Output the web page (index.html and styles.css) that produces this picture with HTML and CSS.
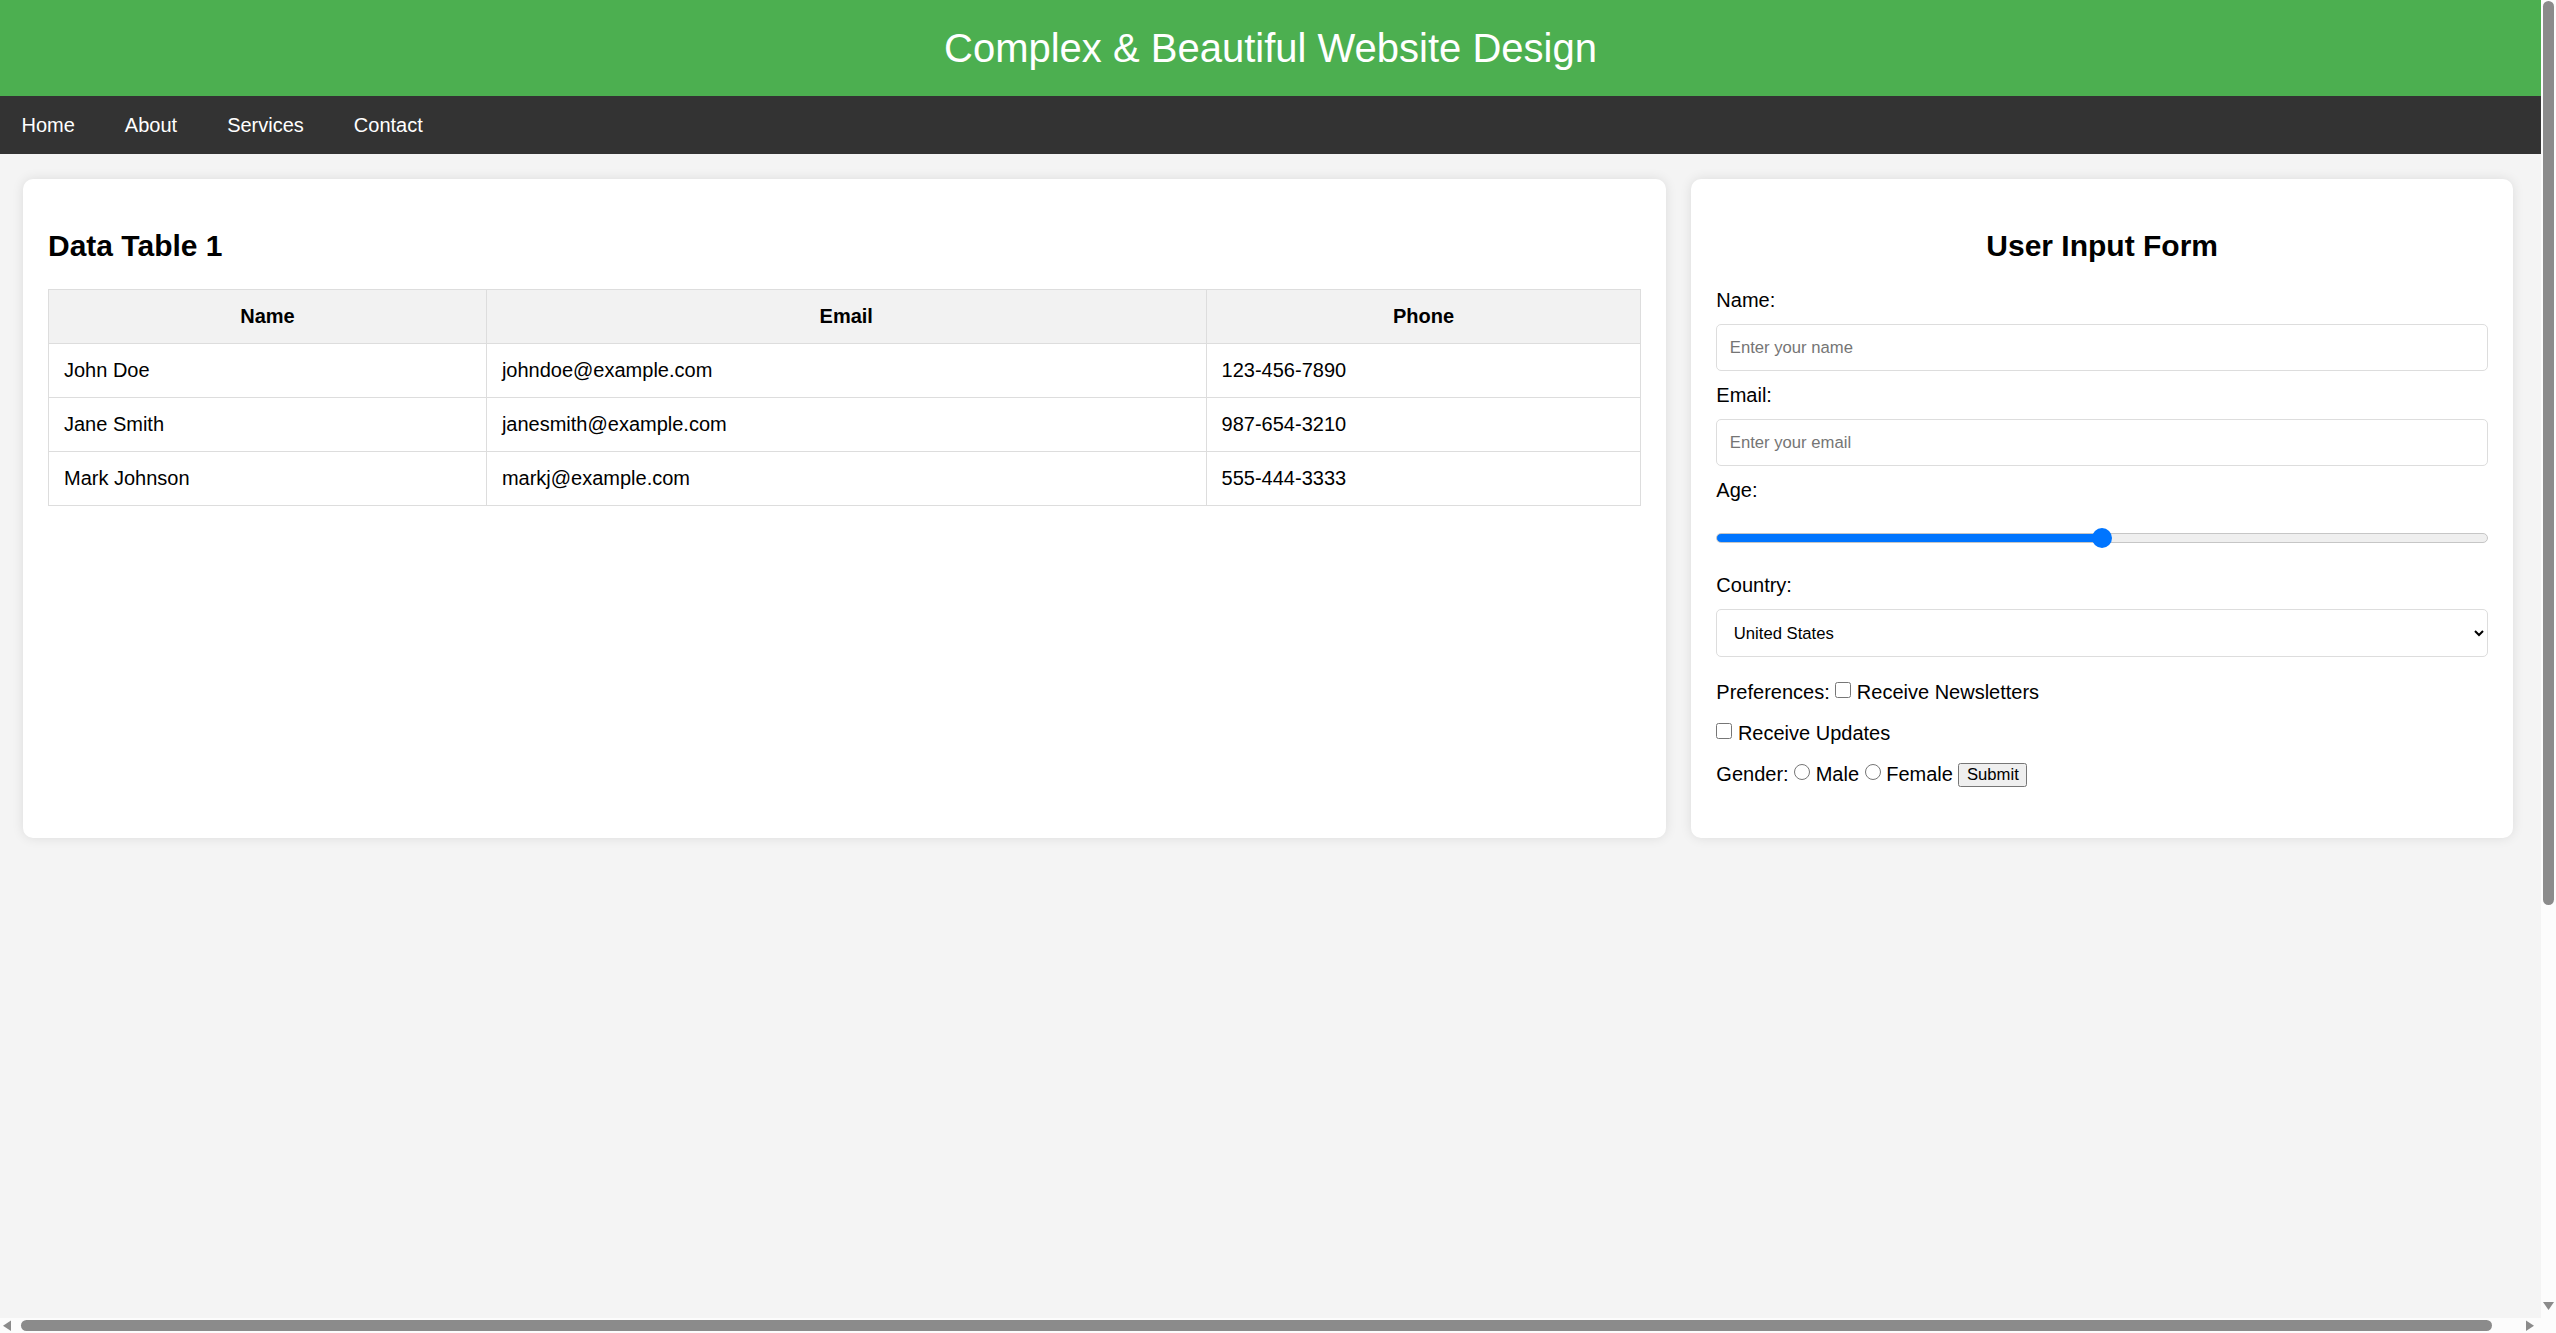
FILE: index.html
```html
<!DOCTYPE html>
<html lang="en">
<head>
<meta charset="utf-8">
<title>Complex &amp; Beautiful Website Design</title>
<link rel="stylesheet" href="styles.css">
</head>
<body>
<div class="window">
  <div class="page">
    <header class="site-header">
      <h1 class="site-title">Complex &amp; Beautiful Website Design</h1>
    </header>
    <nav class="nav">
      <a class="nav-link" href="#">Home</a>
      <a class="nav-link" href="#">About</a>
      <a class="nav-link" href="#">Services</a>
      <a class="nav-link" href="#">Contact</a>
    </nav>
    <main class="layout">
      <section class="card">
        <h2 class="card-title">Data Table 1</h2>
        <table class="data-table">
          <colgroup>
            <col class="col-name">
            <col class="col-email">
            <col class="col-phone">
          </colgroup>
          <thead>
            <tr><th>Name</th><th>Email</th><th>Phone</th></tr>
          </thead>
          <tbody>
            <tr><td>John Doe</td><td>johndoe@example.com</td><td>123-456-7890</td></tr>
            <tr><td>Jane Smith</td><td>janesmith@example.com</td><td>987-654-3210</td></tr>
            <tr><td>Mark Johnson</td><td>markj@example.com</td><td>555-444-3333</td></tr>
          </tbody>
        </table>
      </section>
      <section class="card">
        <h2 class="card-title card-title-center">User Input Form</h2>
        <form class="form">
          <label class="field-label" for="name">Name:</label>
          <input class="field" id="name" type="text" placeholder="Enter your name">
          <label class="field-label" for="email">Email:</label>
          <input class="field" id="email" type="email" placeholder="Enter your email">
          <label class="field-label" for="age">Age:</label>
          <input class="range" id="age" type="range" min="0" max="100" value="50">
          <label class="field-label" for="country">Country:</label>
          <select class="field field-select" id="country">
            <option>United States</option>
            <option>Canada</option>
            <option>United Kingdom</option>
          </select>
          <div class="line">Preferences: <input class="tick" type="checkbox"> Receive Newsletters</div>
          <div class="line"><input class="tick" type="checkbox"> Receive Updates</div>
          <div class="line">Gender: <input class="tick" type="radio" name="gender"> Male <input class="tick" type="radio" name="gender"> Female <button class="submit" type="submit">Submit</button></div>
        </form>
      </section>
    </main>
  </div>

  <div class="vscroll" aria-hidden="true">
    <div class="vthumb"></div>
    <div class="scroll-fill"></div>
    <svg class="arrow-down" width="15" height="16" viewBox="0 0 15 16"><polygon points="2,0 13,0 7.5,8" fill="#8b8b8b"/></svg>
  </div>

  <div class="hscroll" aria-hidden="true">
    <svg class="arrow-h" width="15" height="15" viewBox="0 0 15 15"><polygon points="11,2.5 11,13 3,7.75" fill="#8b8b8b"/></svg>
    <div class="hthumb"></div>
    <div class="scroll-fill"></div>
    <svg class="arrow-h" width="15" height="15" viewBox="0 0 15 15"><polygon points="0,2.5 0,13 8,7.75" fill="#8b8b8b"/></svg>
  </div>

  <div class="scroll-corner"></div>
</div>
</body>
</html>
```

FILE: styles.css
```css
html, body {
  margin: 0;
  padding: 0;
}

body {
  background: #f4f4f4;
  color: #000;
  font-family: "Liberation Sans", Arial, sans-serif;
  font-size: 20px;
  line-height: normal;
}

.window {
  display: grid;
  grid-template-columns: 1fr 15px;
  grid-template-rows: 1fr 15px;
  height: 100vh;
  overflow: hidden;
}

.page {
  min-width: 0;
  min-height: 0;
  overflow: hidden;
  background: #f4f4f4;
}

/* scrollbars of the captured window */
.vscroll {
  background: #fcfcfc;
  display: flex;
  flex-direction: column;
  align-items: center;
  padding-top: 1px;
}

.vthumb {
  width: 11px;
  height: 904px;
  border-radius: 6px;
  background: #8b8b8b;
}

.scroll-fill {
  flex: 1;
}

.arrow-down {
  display: block;
  flex: none;
}

.hscroll {
  background: #fcfcfc;
  display: flex;
  align-items: center;
}

.arrow-h {
  display: block;
  flex: none;
}

.hthumb {
  width: 2471px;
  height: 11px;
  margin-left: 6px;
  border-radius: 6px;
  background: #8b8b8b;
  flex: none;
}

.scroll-corner {
  background: #fcfcfc;
}

/* page */
.site-header {
  background: #4caf50;
  color: #fff;
  padding: 25px;
  text-align: center;
}

.site-title {
  margin: 0;
  font-size: 40px;
  font-weight: normal;
  line-height: 46px;
}

.nav {
  background: #333;
  display: flex;
  gap: 50px;
  padding: 0 21.5px;
}

.nav-link {
  color: #fff;
  text-decoration: none;
  font-size: 20px;
  line-height: 23px;
  padding: 17.5px 0;
}

.layout {
  display: grid;
  grid-template-columns: 2fr 1fr;
  gap: 25px;
  padding: 25px 28px 25px 23px;
}

.card {
  background: #fff;
  border-radius: 10px;
  box-shadow: 0 0 12px rgba(0, 0, 0, 0.1);
  padding: 25px;
  min-width: 0;
}

.card-title {
  font-size: 30px;
  font-weight: bold;
  margin: 25px 0;
  line-height: 34.5px;
}

.card-title-center {
  text-align: center;
}

.data-table {
  width: 100%;
  border-collapse: collapse;
  font-size: 20px;
}

.col-name { width: 27.5%; }
.col-email { width: 45.2%; }
.col-phone { width: 27.3%; }

.data-table th,
.data-table td {
  border: 1px solid #ddd;
  padding: 15px;
  line-height: 23px;
  text-align: left;
}

.data-table th {
  background: #f2f2f2;
  text-align: center;
  font-weight: bold;
}

.form {
  margin: 0 0 20px;
}

.field-label {
  display: block;
  line-height: 23px;
}

.field {
  display: block;
  width: 100%;
  box-sizing: border-box;
  padding: 12.5px;
  margin: 12.5px 0;
  border: 1px solid #ddd;
  border-radius: 5px;
  background: #fff;
  color: #000;
  font-family: "Liberation Sans", Arial, sans-serif;
  font-size: 16.67px;
}

.field::placeholder {
  color: #757575;
}

.field-select {
  height: 48px;
  padding: 0 12.5px;
}

.range {
  -webkit-appearance: none;
  appearance: none;
  display: block;
  width: 100%;
  height: 47px;
  margin: 12.5px 0;
  padding: 0;
  background: transparent;
}

.range::-webkit-slider-runnable-track {
  height: 10px;
  box-sizing: border-box;
  border-radius: 5px;
  border: 1px solid #c6c6c6;
  background: linear-gradient(to right, #0075ff 0, #0075ff 50%, #efefef 50%, #efefef 100%);
}

.range::-webkit-slider-thumb {
  -webkit-appearance: none;
  appearance: none;
  width: 20px;
  height: 20px;
  border-radius: 50%;
  background: #0075ff;
  border: none;
  margin-top: -6px;
}

.line {
  line-height: 23px;
}

.tick {
  width: 16px;
  height: 16px;
  margin: 12.5px 0;
  vertical-align: baseline;
}

.submit {
  font-family: "Liberation Sans", Arial, sans-serif;
  font-size: 16.67px;
  padding: 1.25px 7.5px;
  border: 1px solid #767676;
  border-radius: 2.5px;
  background: #efefef;
  color: #000;
  line-height: normal;
  margin: 0;
}
```
